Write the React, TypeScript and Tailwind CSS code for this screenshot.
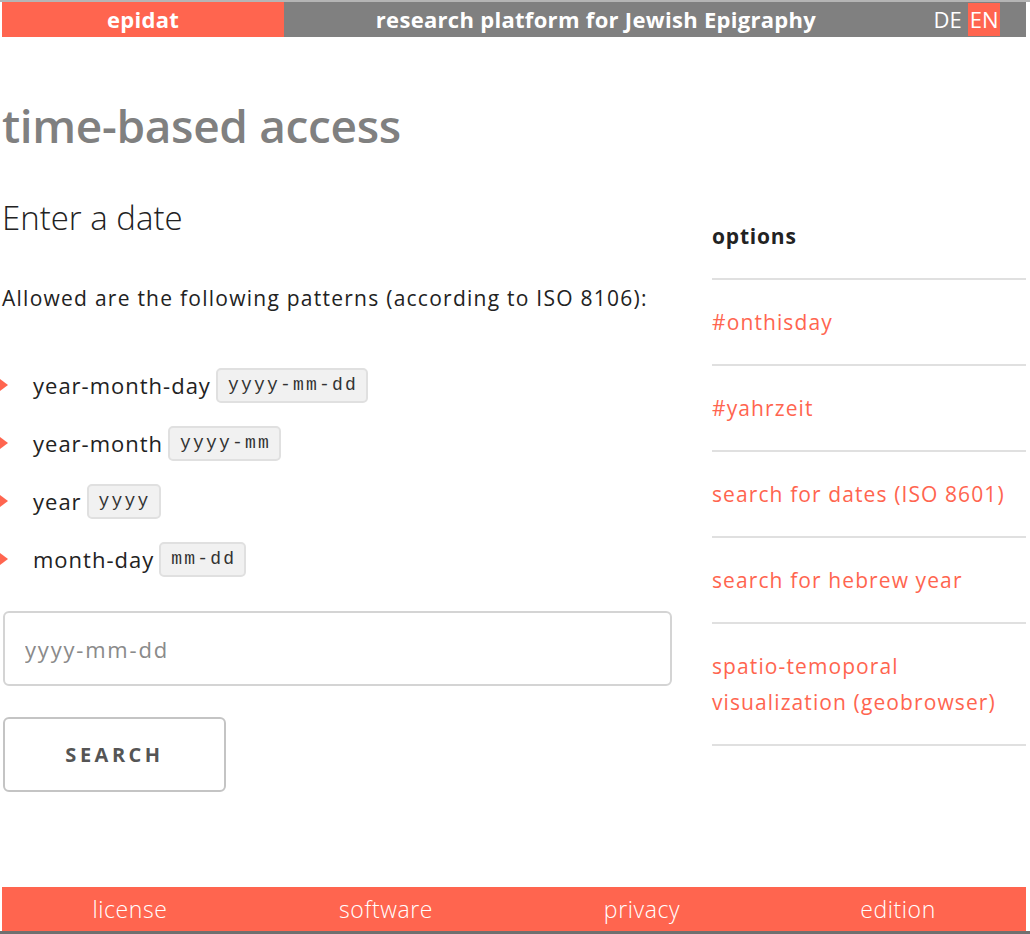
import { useState } from 'react'

const patterns = [
  { label: 'year-month-day', code: 'yyyy-mm-dd' },
  { label: 'year-month', code: 'yyyy-mm' },
  { label: 'year', code: 'yyyy' },
  { label: 'month-day', code: 'mm-dd' },
]

const options = [
  '#onthisday',
  '#yahrzeit',
  'search for dates (ISO 8601)',
  'search for hebrew year',
  'spatio-temoporal visualization (geobrowser)',
]

const footerLinks = ['license', 'software', 'privacy', 'edition']

export default function App() {
  const [date, setDate] = useState('')

  return (
    <div className="min-h-[934px] bg-white font-['Open_Sans',sans-serif] text-[#222]">
      <div className="h-[2px] bg-[#b5b5b5]" />
      <header className="grid grid-cols-[282px_624px_118px] h-[35px] ml-[2px] text-white">
        <div className="bg-[#ff654f] flex items-center justify-center text-[22px] font-bold tracking-[0.3px]">epidat</div>
        <div className="bg-[#808080] flex items-center justify-center text-[22px] font-bold tracking-[0.3px]">research platform for Jewish Epigraphy</div>
        <div className="bg-[#808080] flex items-center justify-center gap-[6px] text-[22px]">
          <span>DE</span>
          <span className="bg-[#ff654f] px-[2px]">EN</span>
        </div>
      </header>

      <main className="pl-[2px] pr-[4px]">
        <h1 className="mt-[60px] text-[46px] font-semibold tracking-[-0.35px] text-[#808080] leading-[56px]">time-based access</h1>

        <div className="grid grid-cols-[670px_314px] gap-[40px] mt-[42px]">
          <section>
            <h2 className="mt-[3px] text-[33px] font-light leading-[40px]">Enter a date</h2>
            <p className="mt-[45px] text-[21px] leading-[30px] tracking-[1.25px]">Allowed are the following patterns (according to ISO 8106):</p>
            <ul className="mt-[54px] flex flex-col gap-[22px]">
              {patterns.map(p => (
                <li key={p.label} className="flex items-center h-[36px] -ml-[2px]">
                  <span className="w-0 h-0 border-y-[6px] border-y-transparent border-l-[8px] border-l-[#ff654f] mr-[25px]" />
                  <span className="text-[22px] leading-[30px] tracking-[1px]">{p.label}</span>
                  <code className="ml-[5px] bg-[#f1f1f1] border-2 border-[#e0e0e0] rounded-[5px] pl-[10px] pr-[8px] h-[35px] flex items-center text-[18px] tracking-[2.2px] font-['Liberation_Mono',monospace] text-[#333]">{p.code}</code>
                </li>
              ))}
            </ul>
            <input
              value={date}
              onChange={e => setDate(e.target.value)}
              placeholder="yyyy-mm-dd"
              className="mt-[34px] block w-[669px] h-[75px] ml-[1px] border-2 border-[#d4d4d4] rounded-[6px] px-[20px] text-[22px] tracking-[1.8px] placeholder:text-[#8a8a8a] outline-none"
            />
            <button className="mt-[31px] ml-[1px] w-[223px] h-[75px] border-2 border-[#c4c4c4] rounded-[6px] text-[20px] font-bold tracking-[3.5px] text-[#555]">SEARCH</button>
          </section>

          <aside className="pt-[26px]">
            <h3 className="text-[21px] font-bold leading-[30px] tracking-[0.8px] pb-[27px] border-b-2 border-[#e0e0e0]">options</h3>
            {options.map(o => (
              <a key={o} href="#" className="block py-[24px] text-[21px] leading-[36px] tracking-[1.1px] text-[#ff654f] border-b-2 border-[#e0e0e0]">{o}</a>
            ))}
          </aside>
        </div>
      </main>

      <footer className="mt-[95px] ml-[2px] mr-[4px] h-[44px] bg-[#ff654f] grid grid-cols-4 items-center text-center text-white text-[23px] font-light tracking-[0.6px]">
        {footerLinks.map(f => <a key={f} href="#">{f}</a>)}
      </footer>
      <div className="h-[4px] bg-[#6f6f6f]" />
    </div>
  )
}
